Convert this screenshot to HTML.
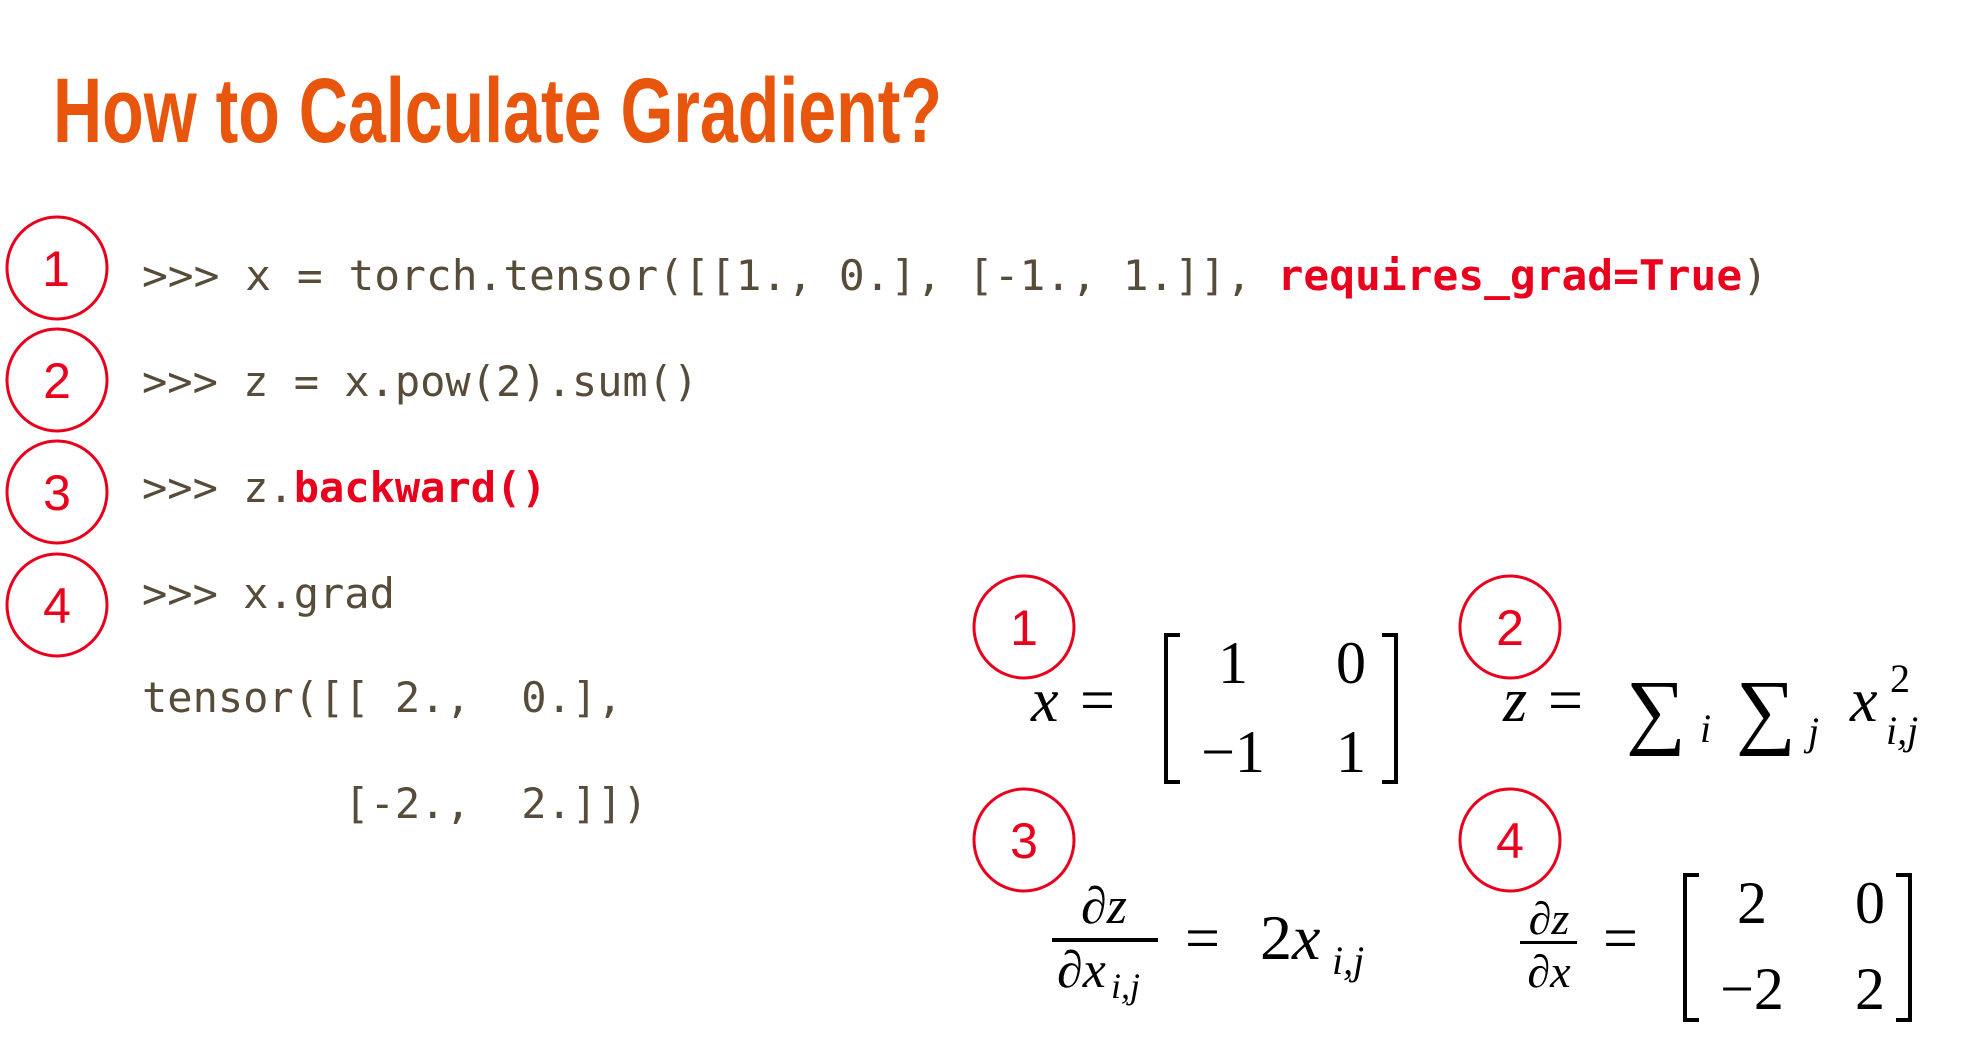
<!DOCTYPE html>
<html><head><meta charset="utf-8"><style>
html,body{margin:0;padding:0;background:#fff;}
svg{display:block}
.m{font-family:"DejaVu Sans Mono","Liberation Mono",monospace;font-size:42px;fill:#574b3a}
.r{fill:#e8001c;font-weight:bold}
.t{font-family:"Liberation Serif",serif;fill:#000}
.i{font-style:italic}
</style></head><body>
<svg width="1974" height="1054" viewBox="0 0 1974 1054" xmlns="http://www.w3.org/2000/svg">
<text x="53" y="142" font-family="Liberation Sans, sans-serif" font-weight="bold" font-size="92" fill="#e8560e" textLength="889" lengthAdjust="spacingAndGlyphs">How to Calculate Gradient?</text>
<g fill="none" stroke="#e8001c" stroke-width="3">
<ellipse cx="57" cy="268" rx="50" ry="51"/><ellipse cx="57" cy="380" rx="50" ry="51"/>
<ellipse cx="57" cy="492" rx="50" ry="51"/><ellipse cx="57" cy="605" rx="50" ry="51"/>
<ellipse cx="1024" cy="627" rx="50" ry="51"/><ellipse cx="1510" cy="627" rx="50" ry="51"/>
<ellipse cx="1024" cy="840" rx="50" ry="51"/><ellipse cx="1510" cy="840" rx="50" ry="51"/>
</g>
<g font-family="Liberation Sans, sans-serif" font-size="50" fill="#e8001c" text-anchor="middle">
<text x="56" y="286">1</text><text x="57" y="398">2</text><text x="57" y="510">3</text><text x="57" y="623">4</text>
<text x="1024" y="645">1</text><text x="1510" y="645">2</text><text x="1024" y="858">3</text><text x="1510" y="858">4</text>
</g>
<text class="m" x="142" y="290" textLength="1626" lengthAdjust="spacingAndGlyphs">&gt;&gt;&gt; x = torch.tensor([[1., 0.], [-1., 1.]], <tspan class="r">requires_grad=True</tspan>)</text>
<text class="m" x="142" y="396">&gt;&gt;&gt; z = x.pow(2).sum()</text>
<text class="m" x="142" y="502">&gt;&gt;&gt; z.<tspan class="r">backward()</tspan></text>
<text class="m" x="142" y="608">&gt;&gt;&gt; x.grad</text>
<text class="m" x="142" y="712" xml:space="preserve">tensor([[ 2.,  0.],</text>
<text class="m" x="142" y="818" xml:space="preserve">        [-2.,  2.]])</text>
<!-- formula 1 -->
<text class="t i" x="1031" y="721" font-size="62">x</text>
<text class="t" x="1080" y="721" font-size="62">=</text>
<g fill="none" stroke="#000" stroke-width="4">
<path d="M1180 635 H1166 V782 H1180"/><path d="M1382 635 H1396 V782 H1382"/>
<path d="M1699 875 H1685 V1020 H1699"/><path d="M1896 875 H1910 V1020 H1896"/>
</g>
<g class="t" font-size="60" text-anchor="middle">
<text x="1233" y="683">1</text><text x="1351" y="683">0</text>
<text x="1233" y="772">−1</text><text x="1351" y="772">1</text>
<text x="1752" y="923">2</text><text x="1870" y="923">0</text>
<text x="1752" y="1009">−2</text><text x="1870" y="1009">2</text>
</g>
<!-- formula 2 -->
<text class="t i" x="1503" y="721" font-size="62">z</text>
<text class="t" x="1548" y="721" font-size="62">=</text>
<text class="t" x="1626" y="738" font-size="84">∑</text>
<text class="t i" x="1700" y="742" font-size="40">i</text>
<text class="t" x="1736" y="738" font-size="84">∑</text>
<text class="t i" x="1808" y="745" font-size="40">j</text>
<text class="t i" x="1850" y="721" font-size="62">x</text>
<text class="t" x="1890" y="692" font-size="40">2</text>
<text class="t i" x="1886" y="744" font-size="40">i,j</text>
<!-- formula 3 -->
<text class="t i" x="1104" y="923" font-size="52" text-anchor="middle">∂z</text>
<rect x="1052" y="938" width="106" height="4" fill="#000"/>
<text class="t i" x="1057" y="987" font-size="52">∂x</text>
<text class="t i" x="1111" y="998" font-size="36">i,j</text>
<text class="t" x="1185" y="959" font-size="62">=</text>
<text class="t" x="1260" y="959" font-size="64">2<tspan class="i">x</tspan></text>
<text class="t i" x="1332" y="974" font-size="40">i,j</text>
<!-- formula 4 -->
<text class="t i" x="1549" y="934" font-size="46" text-anchor="middle">∂z</text>
<rect x="1520" y="941" width="57" height="3" fill="#000"/>
<text class="t i" x="1549" y="987" font-size="46" text-anchor="middle">∂x</text>
<text class="t" x="1603" y="959" font-size="62">=</text>
</svg>
</body></html>
